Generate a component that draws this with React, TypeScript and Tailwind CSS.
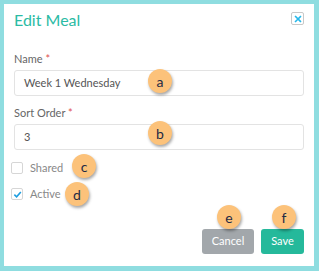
import React from "react";

function Badge({ letter, className }: { letter: string; className: string }) {
  return (
    <span
      className={`absolute flex h-[24px] w-[24px] items-center justify-center rounded-full bg-[#fcc27a] text-[14px] text-[#1f2a44] shadow-[1px_2px_3px_rgba(0,0,0,0.35)] ${className}`}
    >
      {letter}
    </span>
  );
}

export default function App() {
  return (
    <div
      className="h-[271px] w-[319px] bg-[#8fdde0] pt-[4px] pb-[5px] pl-[4px] pr-[5px]"
      style={{ fontFamily: "Lato, 'Liberation Sans', sans-serif" }}
    >
      <div className="relative flex h-full flex-col bg-white px-[10px]">
        {/* Header */}
        <div className="flex items-start justify-between pt-[5px]">
          <h2 className="text-[16px] leading-[22px] text-[#2bbba4]">Edit Meal</h2>
          <button className="mt-[3px] flex h-[13px] w-[13px] items-center justify-center rounded-[2px] border border-[#c8c8c8] bg-white">
            <svg viewBox="0 0 10 10" className="h-[8px] w-[8px]">
              <path d="M2 2 L8 8 M8 2 L2 8" stroke="#27b8ea" strokeWidth="2" strokeLinecap="square" />
            </svg>
          </button>
        </div>

        {/* Name */}
        <label className="mt-[21px] text-[11px] leading-[14px] text-[#666]">
          Name <span className="text-[#e05050]">*</span>
        </label>
        <div className="mt-[4px] flex h-[26px] items-center rounded-[3px] border border-[#e3e3e3] px-[9px] text-[11px] text-[#555]">
          Week 1 Wednesday
        </div>

        {/* Sort Order */}
        <label className="mt-[10px] text-[11px] leading-[14px] text-[#666]">
          Sort Order <span className="text-[#e05050]">*</span>
        </label>
        <div className="mt-[4px] flex h-[26px] items-center rounded-[3px] border border-[#e3e3e3] px-[9px] text-[11px] text-[#555]">
          3
        </div>

        {/* Checkboxes */}
        <div className="mt-[12px] -ml-[3px] flex h-[12px] items-center gap-[7px] text-[11px] leading-[12px] text-[#888]">
          <span className="h-[12px] w-[12px] rounded-[2px] border border-[#d6d6d6] bg-white" />
          Shared
        </div>
        <div className="mt-[14px] -ml-[3px] flex h-[12px] items-center gap-[7px] text-[11px] leading-[12px] text-[#888]">
          <span className="flex h-[12px] w-[12px] items-center justify-center rounded-[2px] border border-[#d6d6d6] bg-white">
            <svg viewBox="0 0 10 10" className="h-[9px] w-[9px]">
              <path d="M1.5 5.2 L4 7.5 L8.7 2.2" fill="none" stroke="#1e9ee0" strokeWidth="1.8" />
            </svg>
          </span>
          Active
        </div>

        {/* Footer */}
        <div className="mt-auto mb-[12px] flex justify-end gap-[7px]">
          <button className="h-[25px] w-[52px] rounded-[3px] bg-[#a2a7ab] text-[11px] text-white">Cancel</button>
          <button className="h-[25px] w-[43px] rounded-[3px] bg-[#25b99b] text-[11px] text-white">Save</button>
        </div>

        <Badge letter="a" className="left-[144px] top-[65px]" />
        <Badge letter="b" className="left-[144px] top-[117px]" />
        <Badge letter="c" className="left-[68px] top-[150px]" />
        <Badge letter="d" className="left-[61px] top-[178px]" />
        <Badge letter="e" className="left-[213px] top-[201px]" />
        <Badge letter="f" className="left-[268px] top-[201px]" />
      </div>
    </div>
  );
}
